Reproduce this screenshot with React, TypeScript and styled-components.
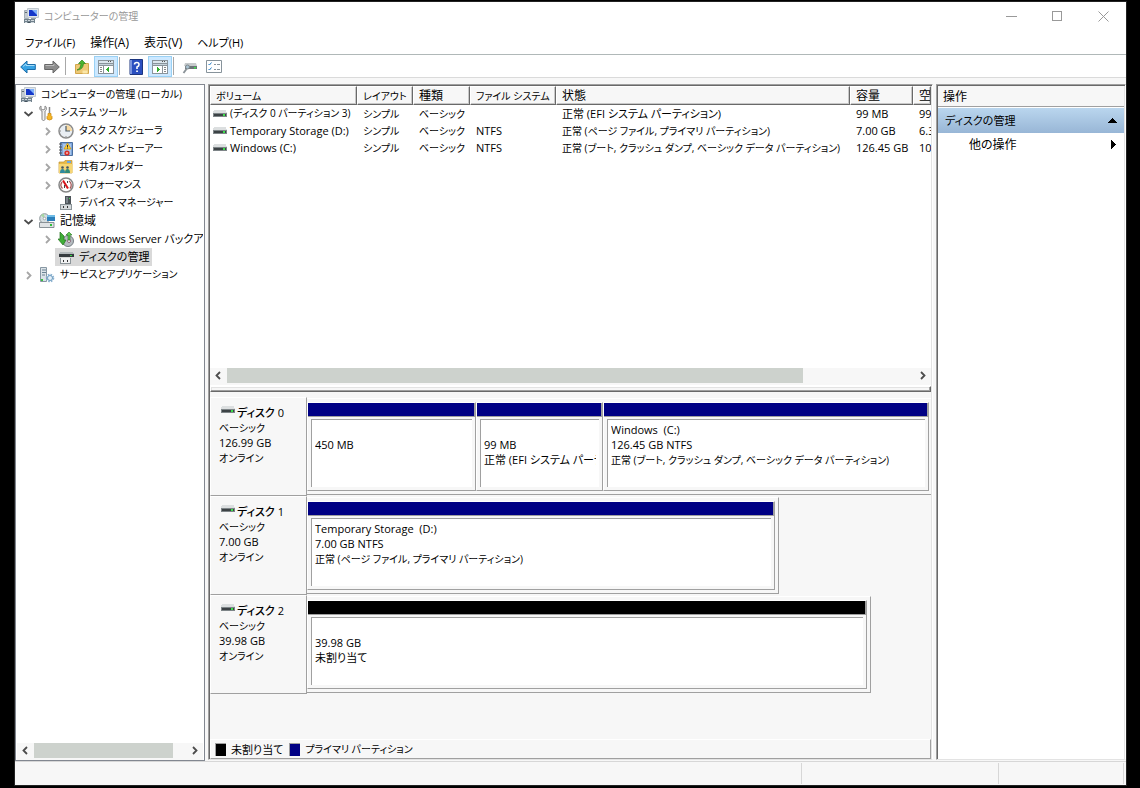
import React from "react";
import styled, { createGlobalStyle, css } from "styled-components";

const face = "#f7f7f7";
const shade = "#a0a0a0";
const dark = "#696969";
const light = "#e3e3e3";
const thumb = "#cdd2cd";
const navy = "#000084";

const GlobalStyle = createGlobalStyle`
  * { box-sizing: border-box; }
  body {
    margin: 0;
    background: #000;
    color: #000;
    font: 11px/15px "Open Sans", "Noto Sans CJK JP", sans-serif;
    font-feature-settings: "palt";
  }
  button {
    font: inherit;
    font-feature-settings: inherit;
    color: inherit;
    background: none;
    border: 0;
    padding: 0;
  }
  svg { display: block; flex: none; }
`;

const Sized = styled.span<{ $size: number }>`
  font-size: ${(p) => p.$size}px;
  white-space: pre;
`;

const Text = ({ children, size }: { children: string; size?: number }) => {
  const kana = (children.match(/[\u30a0-\u30ff]/g) || []).length;
  const kanji = (children.match(/[\u4e00-\u9fff]/g) || []).length;
  const auto = kana / children.length > 0.6 ? 10 : kana === 0 && kanji > 0 ? 12 : 11;
  return <Sized $size={size ?? auto}>{children}</Sized>;
};

/* ---------- window frame ---------- */

const Page = styled.div`
  min-height: 100vh;
  padding: 1px 13px 2px 14px;
  display: flex;
`;

const Window = styled.div`
  flex: 1;
  min-width: 0;
  border: 1px solid #222;
  background: ${face};
  display: flex;
  flex-direction: column;
`;

const TitleBar = styled.header`
  height: 28px;
  background: #fff;
  display: flex;
  align-items: center;
  padding-left: 8px;
  gap: 5px;
`;

const Title = styled.h1`
  flex: 1;
  margin: 0;
  font-size: 11px;
  font-weight: 400;
  color: #999;
`;

const CaptionButton = styled.button`
  width: 46px;
  height: 28px;
  display: grid;
  place-items: center;
`;

const Captions = styled.div`
  display: flex;
`;

const MenuBar = styled.nav`
  height: 25px;
  background: #fff;
  border-bottom: 1px solid #b0b8b8;
  display: flex;
  align-items: center;
  padding-left: 10px;
  gap: 15px;
`;

const ToolBar = styled.div`
  height: 23px;
  background: #fff;
  border-bottom: 1px solid #dadada;
  display: flex;
  align-items: flex-end;
  padding-left: 1px;
`;

const ToolButton = styled.button<{ $on?: boolean }>`
  width: 24px;
  height: 21px;
  display: grid;
  place-items: center;
  ${(p) =>
    p.$on &&
    css`
      background: #cce8ff;
      border: 1px solid #99d1f5;
    `}
`;

const Separator = styled.span`
  width: 1px;
  height: 18px;
  margin: 0 4px 2px 1px;
  background: #a8a8a8;
`;

const Main = styled.main`
  flex: 1;
  min-height: 0;
  display: flex;
  gap: 3px;
  padding-top: 6px;
`;

const StatusBar = styled.footer`
  height: 24px;
  border-top: 1px solid #d7d7d7;
  padding: 1px 2px 1px 0;
  display: flex;
  justify-content: flex-end;
`;

const StatusCell = styled.div<{ $width: number }>`
  width: ${(p) => p.$width}px;
  border-right: 1px solid #d7d7d7;
`;

/* ---------- scroll bar ---------- */

const ScrollTrack = styled.div`
  height: 17px;
  background: ${face};
  display: flex;
  align-items: flex-start;
`;

const ScrollButton = styled.button`
  width: 17px;
  height: 15px;
  display: grid;
  place-items: center;
`;

const ScrollRoom = styled.div`
  flex: 1;
`;

const ScrollThumb = styled.div<{ $share: number }>`
  width: ${(p) => p.$share}%;
  height: 15px;
  background: ${thumb};
`;

/* ---------- tree ---------- */

const TreePane = styled.aside`
  width: 190px;
  flex: none;
  background: #fff;
  border: 1px solid #828790;
  padding: 1px 1px 0;
  display: flex;
  flex-direction: column;
`;

const Tree = styled.ul`
  flex: 1;
  list-style: none;
  margin: 0;
  padding: 0;
  overflow: hidden;
`;

const TreeRow = styled.li<{ $level: number }>`
  height: 18px;
  padding-left: ${(p) => (p.$level === 0 ? 0 : p.$level * 19 - 15)}px;
  display: flex;
  align-items: center;
  white-space: nowrap;
`;

const Twisty = styled.span`
  width: 15px;
  height: 18px;
  flex: none;
  display: grid;
  place-items: center;
`;

const TreeItem = styled.button<{ $selected?: boolean }>`
  height: 18px;
  padding: 0 3px;
  display: flex;
  align-items: center;
  gap: 5px;
  white-space: nowrap;
  background: ${(p) => (p.$selected ? "#d9d9d9" : "none")};

  ${Sized} {
    height: 17px;
  }
`;

/* ---------- sunken panes ---------- */

const Sunken = styled.section`
  min-width: 0;
  margin-bottom: 1px;
  border: 1px solid ${shade};
  border-right-color: #fff;
  border-bottom-color: ${light};
  padding: 1px 1px 0 1px;
  box-shadow: inset 1px 1px 0 ${dark}, inset -1px 0 0 ${light};
  display: flex;
  flex-direction: column;
`;

const CenterPane = styled(Sunken)`
  flex: 1;
`;

const ActionPane = styled(Sunken)`
  width: 190px;
  flex: none;
  background: #fff;
`;

const VolumePane = styled.div`
  flex: 306 1 0;
  background: #fff;
  display: flex;
  flex-direction: column;
  overflow: hidden;
`;

const VolumeArea = styled.div`
  flex: 1;
  overflow: hidden;
`;

const VolumeTable = styled.table`
  width: 100%;
  table-layout: fixed;
  border-collapse: separate;
  border-spacing: 0;
`;

const HeadCell = styled.th`
  height: 19px;
  padding: 0 0 0 5px;
  font-weight: 400;
  text-align: left;
  white-space: nowrap;
  overflow: hidden;
  background: ${face};
  border: 1px solid #fff;
  border-right-color: ${dark};
  border-bottom-color: ${dark};
  box-shadow: inset -1px -1px 0 #c8c8c8;
`;

const Cell = styled.td`
  height: 17px;
  padding: 0 0 0 6px;
  white-space: nowrap;
  overflow: hidden;
`;

const NameCell = styled(Cell)`
  padding-left: 3px;
`;

const VolumeName = styled.span`
  display: flex;
  align-items: center;
  gap: 3px;
`;

const Splitter = styled.div`
  height: 6px;
  margin-top: 1px;
  background: ${face};
  border: 1px solid ${dark};
  border-top-color: #fff;
  border-left-color: #fff;
  box-shadow: inset -1px -1px 0 ${shade}, inset 1px 1px 0 ${light};
`;

/* ---------- disk graph ---------- */

const DiskPane = styled.div`
  flex: 367 1 0;
  display: flex;
  flex-direction: column;
`;

const DiskList = styled.div`
  flex: 1;
  padding-top: 5px;
`;

const DiskRow = styled.div`
  height: 99px;
  display: flex;
`;

const DiskLabel = styled.div`
  width: 97px;
  flex: none;
  padding: 7px 0 0 8px;
  border: 1px solid ${shade};
  border-top-color: #fff;
  border-left-color: #fff;
`;

const DiskTitle = styled.h2`
  margin: 0;
  padding-left: 2px;
  font-size: 11px;
  line-height: 15px;
  font-weight: 500;
  display: flex;
  gap: 2px;

  svg {
    margin-top: 1px;
  }
`;

const DiskTrack = styled.div`
  flex: 1;
  min-width: 0;
  padding: 1px 0;
`;

const DiskGraph = styled.div<{ $share: number }>`
  width: ${(p) => p.$share}%;
  height: 97px;
  padding: 3px ${(p) => (p.$share === 100 ? 2 : 3)}px 3px 0;
  border-top: 1px solid #fff;
  border-bottom: 1px solid ${shade};
  border-right: ${(p) => (p.$share === 100 ? "0" : `1px solid ${shade}`)};
  display: flex;
`;

const Partition = styled.div<{ $weight: number }>`
  flex: ${(p) => p.$weight} 1 0;
  min-width: 0;
  border: 1px solid ${shade};
  border-top-color: #fff;
  border-left-color: #fff;
  display: flex;
  flex-direction: column;
`;

const PartitionBar = styled.div<{ $color: string }>`
  height: 14px;
  background: ${(p) => p.$color};
  border-right: 1px solid ${shade};
  border-bottom: 1px solid ${shade};
`;

const PartitionBody = styled.div`
  flex: 1;
  margin: 2px 3px 3px;
  padding: 2px 3px;
  background: #fff;
  border-top: 1px solid ${shade};
  border-left: 1px solid ${shade};
`;

const Line = styled.div<{ $strong?: boolean }>`
  height: 15px;
  font-weight: ${(p) => (p.$strong ? 500 : 400)};
  white-space: pre;
  overflow: hidden;
`;

const Legend = styled.div`
  height: 20px;
  border: 1px solid ${shade};
  border-top-color: #fff;
  border-left-color: #fff;
  padding-left: 4px;
  display: flex;
  align-items: center;
  gap: 6px;
`;

const LegendItem = styled.span`
  display: flex;
  align-items: center;
  gap: 5px;
`;

const Swatch = styled.span<{ $color: string }>`
  width: 11px;
  height: 13px;
  background: ${(p) => p.$color};
  border-top: 1px solid ${shade};
  border-left: 1px solid ${shade};
`;

/* ---------- actions ---------- */

const ActionHead = styled.h2`
  height: 21px;
  margin: 0 0 1px;
  padding: 2px 5px;
  font-size: 12px;
  line-height: 17px;
  font-weight: 400;
  background: ${face};
  border-bottom: 1px solid ${shade};
`;

const ActionGroup = styled.button`
  height: 25px;
  padding: 0 7px;
  display: flex;
  align-items: center;
  justify-content: space-between;
  background: linear-gradient(#bad6ee, #98b6d6);
`;

const ActionItem = styled.button`
  height: 22px;
  padding: 0 8px 0 31px;
  display: flex;
  align-items: center;
  justify-content: space-between;
`;

/* ---------- drawings ---------- */

const Svg = ({ children, w = 16, h = 16, crisp = false }: { children: React.ReactNode; w?: number; h?: number; crisp?: boolean }) => (
  <svg width={w} height={h} viewBox={`0 0 ${w} ${h}`} fill="none" aria-hidden="true" shapeRendering={crisp ? "crispEdges" : "auto"}>
    {children}
  </svg>
);

const ComputerIcon = () => (
  <Svg>
    <path d="M1.500 2.500h4v8h-4z" fill="#c3cbd1" stroke="#a3adb5" />
    <path d="M2 4.500h2" stroke="#5f6b73" />
    <path d="M4.500 .5h11v9h-11z" fill="#dfe5ea" stroke="#c0c8cf" />
    <path d="M6 2h8v6H6z" fill="#1537c9" />
    <path d="M9 2h5v5z" fill="#7fb0fa" />
    <path d="M8 10h5v1H8z" fill="#97a2aa" />
    <path d="M1 11h11v4H1z" fill="#71818c" />
    <path d="M2 12.500h2m1 0h2m1 0h3M2 14.500h2m4 0h3" stroke="#cfd7dc" />
    <path d="M5 14h2v1H5z" fill="#44525c" />
  </Svg>
);

const ToolsIcon = () => (
  <Svg>
    <path d="M2 1v3l2 1 2-1V1c2 1 2 4 0 5v8c0 2-3 2-3 0V6C0 5 0 2 2 1z" fill="#f0f0f0" stroke="#858585" />
    <path d="M10.500 2v6" stroke="#888" strokeWidth="1.500" />
    <path d="M9 8.500h3v2l1 1V14q-2.500 2-5 0v-2.500l1-1z" fill="#f6b624" stroke="#c98a18" strokeWidth=".8" />
  </Svg>
);

const ClockIcon = () => (
  <Svg>
    <circle cx="8" cy="8" r="7" fill="#e9eef3" stroke="#8b8b8b" strokeWidth="1.500" />
    <path d="M8 8V2a6 6 0 0 1 6 6z" fill="#f7d9a0" />
    <path d="M8 3v5h4" stroke="#4a5a68" strokeWidth="1.200" />
    <path d="M8 13v1M2 8h1" stroke="#888" />
  </Svg>
);

const EventIcon = () => (
  <Svg>
    <path d="M2.500 1.500h12v13h-12z" fill="#7fa6dc" stroke="#4b6f9f" />
    <path d="M5 3h8v11H5z" fill="#a9c6ea" />
    <path d="M1 3h3M1 6h3M1 9h3M1 12h3" stroke="#555" />
    <path d="M9.500 2l3.500 6H6z" fill="#ffcf33" stroke="#c99510" strokeWidth=".7" />
    <path d="M9.500 4v2m0 .5v1" stroke="#333" />
    <circle cx="9" cy="12" r="2.600" fill="#d9302c" />
    <path d="M8 12h2" stroke="#fff" />
  </Svg>
);

const SharedIcon = () => (
  <Svg>
    <path d="M1 3h5l1-1.500h7V14H1z" fill="#e8bb4a" stroke="#c2922e" strokeWidth=".7" />
    <path d="M9 2h4v2H9z" fill="#6fa8dd" />
    <path d="M1 5h13.500v9H1z" fill="#f6d675" />
    <circle cx="4.500" cy="8.500" r="1.300" fill="#425563" />
    <circle cx="9.500" cy="8.500" r="1.300" fill="#425563" />
    <path d="M2 14q0-4 2.500-4T7 14z" fill="#2f8aa0" />
    <path d="M7 14q0-4 2.500-4t2.500 4z" fill="#2f8a7a" />
  </Svg>
);

const PerformanceIcon = () => (
  <Svg>
    <circle cx="8" cy="8" r="7" fill="#fff" stroke="#858585" strokeWidth="1.500" />
    <path d="M4.500 11.500A5 5 0 0 1 4 5M12 11.500A5 5 0 0 0 11 4" stroke="#a85a5a" strokeWidth="1.300" />
    <path d="M5 3.500l5 8" stroke="#d8141c" strokeWidth="2" />
    <path d="M6.500 11V8m3-4v2" stroke="#444" />
  </Svg>
);

const DeviceIcon = () => (
  <Svg crisp>
    <path d="M7 1h6v8H7z" fill="#4c5358" />
    <path d="M8 2h2v6H8z" fill="#7c858b" />
    <path d="M11 3h1v1h-1z" fill="#3ee04d" />
    <path d="M2 9h12v6H2z" fill="#d5d9db" />
    <path d="M2 9h12v1H2zM2 14h12v1H2zM2 9h1v6H2zM13 9h1v6h-1z" fill="#8c9599" />
    <path d="M5 11h1v2H5zM9 11h1v2H9z" fill="#333" />
  </Svg>
);

const StorageIcon = () => (
  <Svg>
    <circle cx="5.500" cy="5.500" r="4.800" fill="#d5dde0" stroke="#8b9599" />
    <path d="M5.500 5.500L2 2.500A5 5 0 0 1 5 .8z" fill="#a6d8a2" />
    <circle cx="5.500" cy="5.500" r="1.300" fill="#fff" stroke="#8b9599" strokeWidth=".7" />
    <path d="M8 2h8v6H8z" fill="#2c7fbb" />
    <path d="M8 2h8v2H8z" fill="#6ebbe6" />
    <path d="M.5 9.500h14.500v5H.5z" fill="#dfe2e4" stroke="#899196" />
    <path d="M11 12h2" stroke="#2dbf3a" strokeWidth="2" />
  </Svg>
);

const BackupIcon = () => (
  <Svg>
    <circle cx="10" cy="10" r="5.500" fill="#b5bbc0" stroke="#747d83" />
    <circle cx="11" cy="10" r="1.500" fill="#fff" stroke="#8b6a7a" />
    <path d="M2 1v7H0l5 6 3-5H6V5z" fill="#3fae37" stroke="#25741f" strokeWidth=".7" />
    <path d="M12 9V4h2l-3-3-3 3h2v5z" fill="#5bcb4f" stroke="#25741f" strokeWidth=".6" />
  </Svg>
);

const DiskManagementIcon = () => (
  <Svg crisp>
    <path d="M2 3h13l1 2H1z" fill="#b4b9bc" />
    <path d="M1 5h15v3H1z" fill="#373c40" />
    <path d="M12 6h2v1h-2z" fill="#36db46" />
    <path d="M2 9h11v6H2z" fill="#f2f3f4" />
    <path d="M2 9h1v6H2zM12 9h1v6h-1zM2 14h11v1H2z" fill="#8c9599" />
    <path d="M5 11h1v2H5zM9 11h1v2H9z" fill="#333" />
  </Svg>
);

const ServicesIcon = () => (
  <Svg>
    <path d="M1.500 .5h6v14h-6z" fill="#dce3e8" stroke="#8797a3" />
    <path d="M3 3h4M3 5.500h4M3 8h3" stroke="#6a8394" />
    <path d="M2 12h2v2H2z" fill="#3bbf44" />
    <circle cx="11" cy="11" r="3.300" stroke="#8db3d0" strokeWidth="2" strokeDasharray="1.600 1" />
    <circle cx="11" cy="11" r="2.500" fill="#e5f0f8" stroke="#6f9dc1" />
  </Svg>
);

const DriveIcon = () => (
  <Svg w={14} h={8} crisp>
    <path d="M1 0h12l1 3H0z" fill="#dcdfe0" />
    <path d="M0 3h14v4H0z" fill="#7e8588" />
    <path d="M1 4h12v2H1z" fill="#3c4245" />
    <path d="M10 4h2v2h-2z" fill="#3be04a" />
  </Svg>
);

const BackIcon = () => (
  <Svg>
    <path d="M.7 8L7 2v3.500h8.300v5H7V14z" fill="#38a3e4" stroke="#1b6ca8" />
    <path d="M3 7.500L6 5v1.500h8.500" stroke="#a4dcf8" />
  </Svg>
);

const ForwardIcon = () => (
  <Svg>
    <path d="M15.300 8L9 2v3.500H.7v5H9V14z" fill="#8d8d8d" stroke="#666" />
    <path d="M1.500 6.500H10V5" stroke="#bcbcbc" />
  </Svg>
);

const FolderUpIcon = () => (
  <Svg>
    <path d="M1.500 5.500H6l1-1h7.500v10h-13z" fill="#eec977" stroke="#d2a64b" />
    <path d="M8.500 11.500h5v3h-5z" fill="#fbe7a8" />
    <path d="M3 11q3.500-1 4-6.500H4.500L8 1l3.500 3.500H9.500Q9 11 3 11z" fill="#49b52f" stroke="#2a8217" strokeWidth=".7" />
  </Svg>
);

const PaneIcon = ({ flip = false }: { flip?: boolean }) => (
  <Svg w={16} h={14} crisp>
    <path d="M0 0h16v14H0z" fill="#8a949b" />
    <path d="M1 1h14v2H1z" fill="#dbe5ec" />
    <path d="M10 1h1v1h-1zM12 1h1v1h-1z" fill="#555" />
    <path d="M1 4h14v1H1z" fill="#c5d2db" />
    <path d="M1 6h14v7H1z" fill="#fff" />
    {flip ? (
      <>
        <path d="M10 5h1v9h-1z" fill="#8a949b" />
        <path d="M12 7h2v1h-2zM12 9h2v1h-2zM12 11h2v1h-2z" fill="#888" />
        <path d="M5 6l3 3.500L5 13z" fill="#2fae2a" />
      </>
    ) : (
      <>
        <path d="M5 5h1v9H5z" fill="#8a949b" />
        <path d="M2 7h2v1H2zM2 9h2v1H2zM2 11h2v1H2z" fill="#888" />
        <path d="M11 6L8 9.500 11 13z" fill="#2fae2a" />
      </>
    )}
  </Svg>
);

const HelpIcon = () => (
  <Svg>
    <path d="M2 .5h12.500v15H2z" fill="#2a4fc0" stroke="#1b357f" />
    <path d="M2 1h2v14H2z" fill="#7b94dd" />
    <path d="M6.500 5.500Q6.500 3.500 8.800 3.500T11 5.700Q11 7 9 8v2" stroke="#fff" strokeWidth="1.600" />
    <path d="M8.200 11.500h1.700V13H8.200z" fill="#fff" />
  </Svg>
);

const ConnectIcon = () => (
  <Svg>
    <path d="M3 4h11l1 3H2z" fill="#c6cacc" />
    <path d="M3 7h12v3H3z" fill="#6c7478" />
    <path d="M12 8h2v1.500h-2z" fill="#3be04a" />
    <path d="M1.500 14l3-4" stroke="#8a9297" strokeWidth="1.800" />
    <circle cx="5.500" cy="8" r="2" fill="#a9c3d3" stroke="#7f888d" />
  </Svg>
);

const ListIcon = () => (
  <Svg w={16} h={13}>
    <path d="M.5 .5h15v12H.5z" fill="#fff" stroke="#87939b" />
    <path d="M2.500 4l1 1 2-2.500M2.500 9l1 1 2-2.500" stroke="#2a80c8" />
    <path d="M8 4.500h2m1 0h3M8 9.500h2m1 0h3" stroke="#87939b" />
  </Svg>
);

const Angle = ({ dir, color = "#4c4c4c" }: { dir: "left" | "right" | "down"; color?: string }) => (
  <Svg w={9} h={9}>
    <path
      d={{ left: "M6 1L2.500 4.500 6 8", right: "M3 1l3.500 3.500L3 8", down: "M.5 3l4 3.500L8.500 3" }[dir]}
      stroke={color}
      strokeWidth="1.800"
    />
  </Svg>
);

/* ---------- data ---------- */

type Node = { label: string; level: number; icon: React.ReactNode; state?: "open" | "closed"; selected?: boolean };

const nodes: Node[] = [
  { label: "コンピューターの管理 (ローカル)", level: 0, icon: <ComputerIcon /> },
  { label: "システム ツール", level: 1, icon: <ToolsIcon />, state: "open" },
  { label: "タスク スケジューラ", level: 2, icon: <ClockIcon />, state: "closed" },
  { label: "イベント ビューアー", level: 2, icon: <EventIcon />, state: "closed" },
  { label: "共有フォルダー", level: 2, icon: <SharedIcon />, state: "closed" },
  { label: "パフォーマンス", level: 2, icon: <PerformanceIcon />, state: "closed" },
  { label: "デバイス マネージャー", level: 2, icon: <DeviceIcon /> },
  { label: "記憶域", level: 1, icon: <StorageIcon />, state: "open" },
  { label: "Windows Server バックアップ", level: 2, icon: <BackupIcon />, state: "closed" },
  { label: "ディスクの管理", level: 2, icon: <DiskManagementIcon />, selected: true },
  { label: "サービスとアプリケーション", level: 1, icon: <ServicesIcon />, state: "closed" },
];

const columns: { title: string; width?: number }[] = [
  { title: "ボリューム", width: 147 },
  { title: "レイアウト", width: 56 },
  { title: "種類", width: 57 },
  { title: "ファイル システム", width: 86 },
  { title: "状態" },
  { title: "容量", width: 63 },
  { title: "空", width: 18 },
];

const volumes = [
  ["(ディスク 0 パーティション 3)", "シンプル", "ベーシック", "", "正常 (EFI システム パーティション)", "99 MB", "99"],
  ["Temporary Storage (D:)", "シンプル", "ベーシック", "NTFS", "正常 (ページ ファイル, プライマリ パーティション)", "7.00 GB", "6.3"],
  ["Windows (C:)", "シンプル", "ベーシック", "NTFS", "正常 (ブート, クラッシュ ダンプ, ベーシック データ パーティション)", "126.45 GB", "10"],
];

const disks = [
  {
    name: "ディスク 0",
    size: "126.99 GB",
    share: 100,
    parts: [
      { weight: 167, color: navy, lines: ["", "450 MB"] },
      { weight: 125, color: navy, lines: ["", "99 MB", "正常 (EFI システム パーティション)"] },
      { weight: 324, color: navy, lines: ["Windows  (C:)", "126.45 GB NTFS", "正常 (ブート, クラッシュ ダンプ, ベーシック データ パーティション)"] },
    ],
  },
  {
    name: "ディスク 1",
    size: "7.00 GB",
    share: 75.6,
    parts: [
      { weight: 1, color: navy, lines: ["Temporary Storage  (D:)", "7.00 GB NTFS", "正常 (ページ ファイル, プライマリ パーティション)"] },
    ],
  },
  { name: "ディスク 2", size: "39.98 GB", share: 90.4, parts: [{ weight: 1, color: "#000", lines: ["", "39.98 GB", "未割り当て"] }] },
];

const ScrollBar = ({ share }: { share: number }) => (
  <ScrollTrack>
    <ScrollButton aria-label="左へスクロール">
      <Angle dir="left" />
    </ScrollButton>
    <ScrollRoom>
      <ScrollThumb $share={share} />
    </ScrollRoom>
    <ScrollButton aria-label="右へスクロール">
      <Angle dir="right" />
    </ScrollButton>
  </ScrollTrack>
);

export default function App() {
  return (
    <Page>
      <GlobalStyle />
      <Window>
        <TitleBar>
          <ComputerIcon />
          <Title>
            <Text>コンピューターの管理</Text>
          </Title>
          <Captions>
            <CaptionButton aria-label="最小化">
              <Svg w={11} h={11} crisp>
                <path d="M0 5h11v1H0z" fill="#999" />
              </Svg>
            </CaptionButton>
            <CaptionButton aria-label="最大化">
              <Svg w={11} h={11} crisp>
                <path d="M.5 .5h9v9h-9z" stroke="#999" />
              </Svg>
            </CaptionButton>
            <CaptionButton aria-label="閉じる">
              <Svg w={11} h={11}>
                <path d="M.5 .5l10 10M10.500 .5l-10 10" stroke="#999" />
              </Svg>
            </CaptionButton>
          </Captions>
        </TitleBar>
        <MenuBar>
          <button><Text>ファイル(F)</Text></button>
          <button><Text>操作(A)</Text></button>
          <button><Text>表示(V)</Text></button>
          <button><Text>ヘルプ(H)</Text></button>
        </MenuBar>
        <ToolBar>
          <ToolButton aria-label="戻る"><BackIcon /></ToolButton>
          <ToolButton aria-label="進む"><ForwardIcon /></ToolButton>
          <Separator />
          <ToolButton aria-label="上へ"><FolderUpIcon /></ToolButton>
          <ToolButton aria-label="ツリーの表示" $on><PaneIcon /></ToolButton>
          <Separator />
          <ToolButton aria-label="ヘルプ"><HelpIcon /></ToolButton>
          <ToolButton aria-label="操作ウィンドウの表示" $on><PaneIcon flip /></ToolButton>
          <Separator />
          <ToolButton aria-label="接続"><ConnectIcon /></ToolButton>
          <ToolButton aria-label="設定"><ListIcon /></ToolButton>
        </ToolBar>
        <Main>
          <TreePane>
            <Tree>
              {nodes.map((n) => (
                <TreeRow key={n.label} $level={n.level}>
                  {n.level > 0 && (
                    <Twisty>
                      {n.state === "open" && <Angle dir="down" />}
                      {n.state === "closed" && <Angle dir="right" color="#a6a6a6" />}
                    </Twisty>
                  )}
                  <TreeItem $selected={n.selected}>
                    {n.icon}
                    <Text>{n.label}</Text>
                  </TreeItem>
                </TreeRow>
              ))}
            </Tree>
            <ScrollBar share={91.4} />
          </TreePane>

          <CenterPane>
            <VolumePane>
              <VolumeArea>
                <VolumeTable>
                  <colgroup>
                    {columns.map((c) => (
                      <col key={c.title} width={c.width} />
                    ))}
                  </colgroup>
                  <thead>
                    <tr>
                      {columns.map((c) => (
                        <HeadCell key={c.title}>
                          <Text>{c.title}</Text>
                        </HeadCell>
                      ))}
                    </tr>
                  </thead>
                  <tbody>
                    {volumes.map(([name, ...rest]) => (
                      <tr key={name}>
                        <NameCell>
                          <VolumeName>
                            <DriveIcon />
                            <Text>{name}</Text>
                          </VolumeName>
                        </NameCell>
                        {rest.map((text, i) => (
                          <Cell key={i}>{text && <Text>{text}</Text>}</Cell>
                        ))}
                      </tr>
                    ))}
                  </tbody>
                </VolumeTable>
              </VolumeArea>
              <ScrollBar share={83.9} />
              <Splitter />
            </VolumePane>
            <DiskPane>
              <DiskList>
                {disks.map((d) => (
                  <DiskRow key={d.name}>
                    <DiskLabel>
                      <DiskTitle>
                        <DriveIcon />
                        <Text size={11}>{d.name}</Text>
                      </DiskTitle>
                      <Line><Text>ベーシック</Text></Line>
                      <Line><Text>{d.size}</Text></Line>
                      <Line><Text>オンライン</Text></Line>
                    </DiskLabel>
                    <DiskTrack>
                      <DiskGraph $share={d.share}>
                        {d.parts.map((p) => (
                          <Partition key={p.weight} $weight={p.weight}>
                            <PartitionBar $color={p.color} />
                            <PartitionBody>
                              {p.lines.map((l, i) => (
                                <Line key={i} $strong={i === 0}>
                                  {l && <Text size={l === "未割り当て" ? 11 : undefined}>{l}</Text>}
                                </Line>
                              ))}
                            </PartitionBody>
                          </Partition>
                        ))}
                      </DiskGraph>
                    </DiskTrack>
                  </DiskRow>
                ))}
              </DiskList>
              <Legend>
                <LegendItem>
                  <Swatch $color="#000" />
                  <Text size={11}>未割り当て</Text>
                </LegendItem>
                <LegendItem>
                  <Swatch $color={navy} />
                  <Text>プライマリ パーティション</Text>
                </LegendItem>
              </Legend>
            </DiskPane>
          </CenterPane>

          <ActionPane>
            <ActionHead>操作</ActionHead>
            <ActionGroup>
              <Text>ディスクの管理</Text>
              <Svg w={9} h={5} crisp>
                <path d="M4.500 0L9 5H0z" fill="#000" />
              </Svg>
            </ActionGroup>
            <ActionItem>
              <Text>他の操作</Text>
              <Svg w={5} h={9} crisp>
                <path d="M0 0l5 4.500L0 9z" fill="#000" />
              </Svg>
            </ActionItem>
          </ActionPane>
        </Main>
        <StatusBar>
          <StatusCell $width={197} />
          <StatusCell $width={197} />
          <StatusCell $width={125} />
        </StatusBar>
      </Window>
    </Page>
  );
}
